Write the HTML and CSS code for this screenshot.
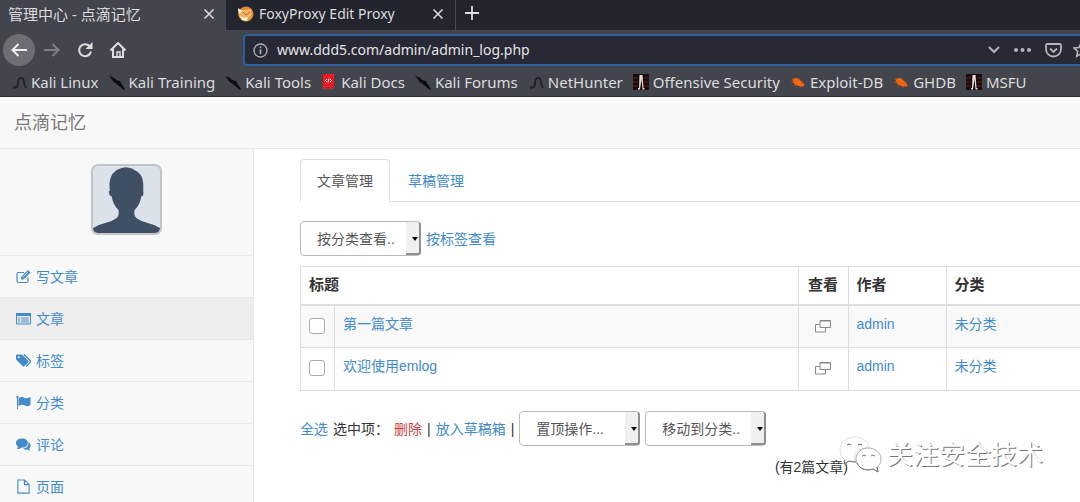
FILE: index.html
```html
<!DOCTYPE html>
<html lang="zh-CN">
<head>
<meta charset="utf-8">
<title>管理中心 - 点滴记忆</title>
<link rel="stylesheet" href="styles.css">
</head>
<body>
<svg class="defs" width="0" height="0" aria-hidden="true">
  <symbol id="dragon" viewBox="0 0 16 16"><path d="M2 14c3 0 5-1 5-4 0-4 1-6 3-6 3 0 3 3 3 5s1 3 2 5" fill="none" stroke="#1e2129" stroke-width="1.800"/><path d="M1 12.500h5" stroke="#2c3540"/></symbol>
  <symbol id="knife" viewBox="0 0 16 16"><path d="M0 1.500l6 3 1 1.500 4 1 1.500 3 3.500 5-1 1-5.500-4.500-3-2.500-2-1-2-3z" fill="#0c0c0e"/></symbol>
  <symbol id="docs" viewBox="0 0 16 16"><path d="M2 0h11v13H2z" fill="#f01820"/><path d="M1 13h12v2.500H1z" fill="#a3343a"/><path d="M6 5L4.500 6.500 6 8M9 5l1.500 1.500L9 8M8 4.500l-1 4" stroke="#fff" fill="none"/></symbol>
  <symbol id="offsec" viewBox="0 0 16 16"><path d="M0 0h16v16H0z" fill="#170b0c"/><path d="M0 4h5M0 8h5M0 12h5M11 4h5M11 8h5M11 12h5" stroke="#6b2522"/><path d="M6.500 1h3l1 13h1v1.500H9.500L8.500 5 7 15.500H5V14h1z" fill="#e8dfdb"/></symbol>
  <symbol id="bug" viewBox="0 0 16 16"><path d="M3 5q3-2 6 0l5 5 .5 2-2.500.5q-5 0-8-3-2-2-1-4.500z" fill="#f4640c"/><path d="M2 5l3 1M1.500 8h4M5 12l2-2M8 4l1 2M12 7l-1 2M10 13.500l1-2" stroke="#d85a12"/></symbol>
  <symbol id="windows" viewBox="0 0 16 13"><path d="M5 .5h10.500v7H5zM4.500 4.500h-4v7.500h10V8" fill="none" stroke="#888"/><path d="M5 1h10" stroke="#888"/></symbol>
</svg>

<header class="browser">
  <div class="tabs">
    <div class="tab tab-active"><span>管理中心 - 点滴记忆</span>
      <button class="plain" aria-label="关闭标签页"><svg width="10" height="10" viewBox="0 0 10 10"><path d="M.5.5l9 9M9.500.5l-9 9" stroke="#ddd" stroke-width="1.500"/></svg></button></div>
    <div class="tab">
      <svg width="17" height="16" viewBox="0 0 17 16"><circle cx="9" cy="8" r="7.500" fill="#d98b36"/><path d="M1 3l5 1 8-1 1 5-3 5-4 1-6-3z" fill="#f3b35e"/><path d="M1 2l4 3-3 3zM3 10l4 2 4-1-1 4-5-1z" fill="#fff1dc"/><path d="M6 6l3 3 4-3" stroke="#b8661f" fill="none"/></svg>
      <span>FoxyProxy Edit Proxy</span>
      <button class="plain" aria-label="关闭标签页"><svg width="10" height="10" viewBox="0 0 10 10"><path d="M.5.5l9 9M9.500.5l-9 9" stroke="#ddd" stroke-width="1.500"/></svg></button></div>
    <button class="plain new-tab" aria-label="新标签页"><svg width="14" height="14" viewBox="0 0 14 14"><path d="M7 0v14M0 7h14" stroke="#ddd" stroke-width="1.800"/></svg></button>
  </div>
  <div class="toolbar">
    <div class="nav-buttons">
      <button class="plain back" aria-label="后退"><svg width="16" height="14" viewBox="0 0 16 14"><path d="M16 7H1.500M7.500 1L1.500 7l6 6" fill="none" stroke="#eee" stroke-width="2"/></svg></button>
      <button class="plain" aria-label="前进"><svg width="16" height="14" viewBox="0 0 16 14"><path d="M0 7h14.500M8.500 1l6 6-6 6" fill="none" stroke="#7c7f86" stroke-width="2"/></svg></button>
      <button class="plain" aria-label="刷新"><svg width="16" height="16" viewBox="0 0 16 16"><path d="M12.500 4A6 6 0 1 0 14 9.500" fill="none" stroke="#ddd" stroke-width="2"/><path d="M15.500 0v7H8.500z" fill="#ddd"/></svg></button>
      <button class="plain" aria-label="主页"><svg width="16" height="16" viewBox="0 0 16 16"><path d="M.5 8.500L8 1l7.500 7.500M3 7v8h10V7" fill="none" stroke="#ddd" stroke-width="2"/><path d="M7 15v-5h3v5" fill="none" stroke="#ddd" stroke-width="1.500"/></svg></button>
    </div>
    <div class="address">
      <svg width="15" height="15" viewBox="0 0 15 15"><circle cx="7.500" cy="7.500" r="6.500" fill="none" stroke="#b5b6bc" stroke-width="1.300"/><path d="M7.500 6.500V11M7.500 3.500v1.700" stroke="#b5b6bc" stroke-width="1.600"/></svg>
      <input type="text" value="www.ddd5.com/admin/admin_log.php" aria-label="地址">
      <svg width="12" height="8" viewBox="0 0 12 8"><path d="M1 1l5 5 5-5" fill="none" stroke="#b5b6bc" stroke-width="2"/></svg>
      <svg width="17" height="4" viewBox="0 0 17 4"><g fill="#b5b6bc"><circle cx="2" cy="2" r="2"/><circle cx="8.500" cy="2" r="2"/><circle cx="15" cy="2" r="2"/></g></svg>
      <svg width="17" height="15" viewBox="0 0 17 15"><path d="M2.500 1h12q1.500 0 1.500 1.500V6a7.500 7.500 0 0 1-15 0V2.500Q1 1 2.500 1z" fill="none" stroke="#b5b6bc" stroke-width="1.800"/><path d="M5 5.500L8.500 9 12 5.500" fill="none" stroke="#b5b6bc" stroke-width="1.800"/></svg>
      <svg class="star" width="16" height="16" viewBox="0 0 16 16"><path d="M8 1l2 4.500 5 .5-3.700 3.300 1 5L8 11.800l-4.300 2.500 1-5L1 6l5-.5z" fill="none" stroke="#b5b6bc" stroke-width="1.600"/></svg>
    </div>
  </div>
  <nav class="bookmarks">
    <a href="#"><svg><use href="#dragon"/></svg>Kali Linux</a>
    <a href="#"><svg><use href="#knife"/></svg>Kali Training</a>
    <a href="#"><svg><use href="#knife"/></svg>Kali Tools</a>
    <a href="#"><svg><use href="#docs"/></svg>Kali Docs</a>
    <a href="#"><svg><use href="#knife"/></svg>Kali Forums</a>
    <a href="#"><svg><use href="#dragon"/></svg>NetHunter</a>
    <a href="#"><svg><use href="#offsec"/></svg>Offensive Security</a>
    <a href="#"><svg><use href="#bug"/></svg>Exploit-DB</a>
    <a href="#"><svg><use href="#bug"/></svg>GHDB</a>
    <a href="#"><svg><use href="#offsec"/></svg>MSFU</a>
  </nav>
</header>

<div class="brand"><a href="#">点滴记忆</a></div>
<div class="page">
  <aside class="sidebar">
    <div class="profile">
      <svg class="avatar" viewBox="0 0 68 68" role="img" aria-label="头像"><path d="M0 68v-5l6-3 12-4q8-3 8-7v-4q-6-6-7-14-3-1-3-5l1-1Q15 10 24 4q8-4 13-2 3 0 5 2 10 4 9 19l0 2q1 5-2 6-1 8-7 14v4q0 4 8 7l12 4 6 3v5z" fill="#405064"/></svg>
    </div>
    <nav class="menu">
      <a href="#"><svg viewBox="0 0 15 14"><path d="M12 8v3.500q0 1.500-1.500 1.500h-8Q1 13 1 11.500v-7Q1 3 2.500 3H8" fill="none" stroke="currentColor" stroke-width="1.200"/><path d="M5 10V7.500L12 .5 14.500 3 7.500 10z" fill="currentColor"/><path d="M6.500 8l5.500-5.500" stroke="#fff" stroke-width=".7"/></svg>写文章</a>
      <a href="#" class="current"><svg viewBox="0 0 15 14"><path d="M.5 2h14v10.500H.5z" fill="none" stroke="currentColor"/><path d="M0 1.500h15v3H0z" fill="currentColor"/><path d="M2 6.500h2M2 8.500h2M2 10.500h2M5 6.500h8M5 8.500h8M5 10.500h8" stroke="currentColor"/></svg>文章</a>
      <a href="#"><svg viewBox="0 0 15 14"><path d="M0 2q0-1 1-1h4q1 0 2 1l5 5q1 1 0 2l-3.500 3.500q-1 1-2 0L1 7Q0 6 0 5z" fill="currentColor"/><circle cx="2.800" cy="3.800" r="1" fill="#f8f8f8"/><path d="M8 1l6 6q1 1 0 2l-4 4" fill="none" stroke="currentColor" stroke-width="1.300"/></svg>标签</a>
      <a href="#"><svg viewBox="0 0 15 14"><path d="M1.500 1v12.500" stroke="currentColor"/><circle cx="1.500" cy="1.500" r="1.200" fill="currentColor"/><path d="M2.500 3q3-2.500 6-.5 2 1 6-1v8q-3 2-5.500.5-2.500-1.500-6.500.5z" fill="currentColor"/></svg>分类</a>
      <a href="#"><svg viewBox="0 0 15 14"><path d="M6 1c8 0 7.500 9 0 9l-3 1.500H1L2 9C-2 6 0 1 6 1z" fill="currentColor"/><path d="M12.500 4.500c3 2 2.500 5 .5 6.500l1.500 2.500-3-1.500q-3 .5-4.500-1 6-.5 5.500-6.500z" fill="currentColor"/></svg>评论</a>
      <a href="#"><svg viewBox="0 0 15 16"><path d="M1.500 1h7l5 5v9h-12zM8.500 1v5h5" fill="none" stroke="currentColor" stroke-width="1.200"/></svg>页面</a>
    </nav>
  </aside>

  <main class="content">
    <nav class="section-tabs">
      <a href="#" class="selected">文章管理</a>
      <a href="#">草稿管理</a>
    </nav>
    <div class="filters">
      <span class="select"><select aria-label="按分类查看"><option>按分类查看..</option></select></span>
      <a href="#">按标签查看</a>
    </div>
    <table>
      <colgroup><col class="c-check"><col><col class="c-view"><col class="c-author"><col class="c-sort"></colgroup>
      <thead><tr><th colspan="2">标题</th><th class="view">查看</th><th>作者</th><th>分类</th></tr></thead>
      <tbody>
        <tr><td><input type="checkbox" aria-label="第一篇文章"></td><td><a href="#">第一篇文章</a></td><td class="view"><a href="#" aria-label="查看"><svg width="16" height="13"><use href="#windows"/></svg></a></td><td><a href="#">admin</a></td><td><a href="#">未分类</a></td></tr>
        <tr><td><input type="checkbox" aria-label="欢迎使用emlog"></td><td><a href="#">欢迎使用emlog</a></td><td class="view"><a href="#" aria-label="查看"><svg width="16" height="13"><use href="#windows"/></svg></a></td><td><a href="#">admin</a></td><td><a href="#">未分类</a></td></tr>
      </tbody>
    </table>
    <div class="actions">
      <a href="#">全选</a>
      <span>选中项：</span>
      <a href="#" class="danger">删除</a>
      <span>|</span>
      <a href="#">放入草稿箱</a>
      <span>|</span>
      <span class="select"><select aria-label="置顶操作"><option>置顶操作...</option></select></span>
      <span class="select"><select aria-label="移动到分类"><option>移动到分类..</option></select></span>
    </div>
    <p class="total">(有2篇文章)</p>
  </main>
</div>

<div class="watermark">
  <svg width="44" height="38" viewBox="0 0 44 38"><path d="M16 1C7 1 1 7 1 14c0 4 2 7 5 10l-1 4 5-3q3 1 7 1C12 18 20 11 31 12 29 5 23 1 16 1z" fill="#fff" stroke="#d4d4d4" stroke-width=".7"/><path d="M6 24l-1 4 5-3q3 1 7 1M8 9q2-2 4 0M19 9q2-2 4 0" fill="none" stroke="#666"/><path d="M29 12c-7 0-12 5-12 11s5 11 12 11q3 0 5-1l5 3-1-5c3-2 4-5 4-8 0-6-6-11-13-11z" fill="#fff" stroke="#999" stroke-width=".8"/><path d="M18 27c3 7 11 8 16 6l5 3-1-5M23 20q2-2 4 0M32 20q2-2 4 0" fill="none" stroke="#777"/></svg>
  <span>关注安全技术</span>
</div>
</body>
</html>
```
FILE: styles.css
```css
* { box-sizing: border-box; }
body {
  margin: 0;
  height: 100vh;
  overflow: hidden;
  display: flex;
  flex-direction: column;
  background: #fff;
  color: #333;
  font: 14px/20px "Liberation Sans", "Noto Sans CJK SC", sans-serif;
}
a { color: #428bca; text-decoration: none; }
svg { flex: none; }
.defs { position: absolute; }
.plain {
  display: flex;
  align-items: center;
  justify-content: center;
  border: 0;
  padding: 0;
  background: none;
}

.browser {
  flex: none;
  background: #43454c;
  border-bottom: 1px solid #2b2a31;
  color: #dcdcde;
  font: 14px/20px "Noto Sans", "Noto Sans CJK SC", sans-serif;
}
.tabs { display: flex; height: 30px; background: #23252e; }
.tab {
  display: flex;
  align-items: center;
  gap: 5px;
  width: 230px;
  padding: 0 12px 3px 11px;
  border-right: 1px solid #484a52;
  white-space: nowrap;
}
.tab-active { width: 226px; padding-left: 8px; background: #43454c; border: 0; font-size: 15px; }
.tab .plain { margin-left: auto; }
.new-tab { width: 32px; padding-bottom: 4px; }
.toolbar { display: flex; height: 38px; padding-top: 4px; }
.nav-buttons { display: flex; align-items: center; width: 243px; padding: 0 0 2px 3px; }
.nav-buttons .plain { width: 32px; height: 32px; }
.nav-buttons .back { background: #6c6e74; border-radius: 50%; }
.nav-buttons .plain + .plain { margin-left: 1px; }
.address {
  flex: 1;
  display: flex;
  align-items: center;
  gap: 14px;
  height: 32px;
  min-width: 0;
  margin-right: -14px;
  padding: 0 3px 0 8px;
  border: 2px solid #2f5f9e;
  border-radius: 4px;
  background: #272934;
}
.address input {
  flex: 1;
  min-width: 0;
  margin-left: -5px;
  border: 0;
  padding: 0;
  background: none;
  color: #e4e4e6;
  font: inherit;
}
.address .star { margin-left: -3px; }
.bookmarks { display: flex; gap: 10px; height: 28px; padding: 0 11px; font-size: 15px; white-space: nowrap; }
.bookmarks a { display: flex; align-items: center; gap: 4px; color: inherit; }
.bookmarks svg { width: 16px; height: 16px; }

.brand {
  flex: none;
  height: 52px;
  padding: 16px 14px;
  border-bottom: 1px solid #e7e7e7;
  background: #f8f8f8;
  font-size: 18px;
}
.brand a { color: #777; }
.page { flex: 1; display: flex; min-height: 0; }
.sidebar { flex: none; width: 254px; background: #f8f8f8; border-right: 1px solid #e7e7e7; }
.profile { display: flex; justify-content: center; padding: 15px 0 20px; }
.avatar {
  width: 71px;
  height: 71px;
  border: 2px solid #c4c4c4;
  border-radius: 7px;
  background: #dce2e9;
}
.menu a {
  display: flex;
  align-items: center;
  gap: 5px;
  height: 42px;
  padding: 0 16px;
  border-top: 1px solid #e7e7e7;
}
.menu .current { background: #eee; }
.menu svg { width: 15px; height: 15px; }

.content { flex: 1; min-width: 0; padding: 10px 0 0 46px; }
.section-tabs { display: flex; border-bottom: 1px solid #ddd; }
.section-tabs a {
  margin: 0 1px -1px 0;
  padding: 11px 16px 10px;
  border: 1px solid transparent;
  border-radius: 4px 4px 0 0;
}
.section-tabs .selected { border-color: #ddd #ddd #fff; background: #fff; color: #555; }
.filters { display: flex; align-items: center; gap: 5px; margin: 19px 0 10px; }
.select { position: relative; display: flex; width: 121px; height: 35px; }
.select::before {
  content: "";
  position: absolute;
  right: 0;
  top: 1px;
  bottom: 1px;
  width: 13px;
  border: solid #8f8f8f;
  border-width: 0 2px 2px 0;
  border-radius: 0 3px 3px 0;
  background: #f0f0f0;
  pointer-events: none;
}
.select::after {
  content: "";
  position: absolute;
  right: 3px;
  top: 16px;
  border: 3px solid transparent;
  border-top: 4px solid #000;
  border-bottom: 0;
  pointer-events: none;
}
select {
  appearance: none;
  width: 100%;
  padding: 0 16px;
  border: 1px solid #bbb;
  border-radius: 4px;
  background: #fff;
  color: #555;
  font: inherit;
}

table { width: 100%; table-layout: fixed; border-collapse: collapse; }
.c-check { width: 34px; }
.c-view { width: 50px; }
.c-author { width: 98px; }
.c-sort { width: 134px; }
th, td { height: 43px; padding: 8px; border: 1px solid #ddd; text-align: left; vertical-align: top; }
th { height: 38px; border-bottom-width: 2px; font-size: 15px; }
th:last-child, td:last-child { border-right: 0; }
tbody tr:nth-child(odd) { background: #f9f9f9; }
.view { text-align: center; }
td.view a { display: flex; justify-content: center; padding-top: 6px; }
input[type="checkbox"] {
  appearance: none;
  display: block;
  width: 16px;
  height: 16px;
  margin: 4px 0 0;
  border: 1px solid #aaa;
  border-radius: 3px;
  background: #fff;
}
.actions { display: flex; align-items: center; gap: 5px; margin-top: 20px; white-space: nowrap; }
.danger { color: #c9403c; }
.total { margin: 11px 232px 0 0; text-align: right; }

.watermark {
  position: absolute;
  right: 37px;
  bottom: 28px;
  display: flex;
  align-items: center;
  gap: 4px;
  color: #fff;
  font-size: 26px;
  line-height: 38px;
  text-shadow: 1px 1px 0 #777;
}
```
